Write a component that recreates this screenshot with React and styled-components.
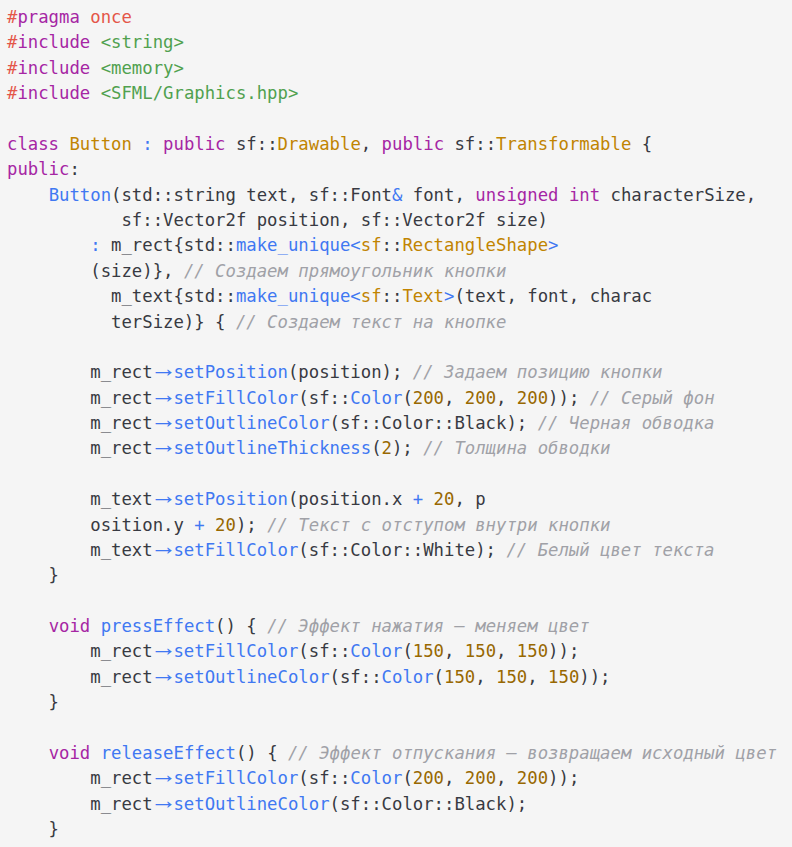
import React from "react";
import styled, { createGlobalStyle } from "styled-components";

const GlobalStyle = createGlobalStyle`
    html, body {
        margin: 0;
        padding: 0;
        background: #f5f5f5;
    }
`;

const colors = {
    k: "#a626a4", // keywords
    t: "#c18401", // types / classes
    f: "#4078f2", // functions
    o: "#4078f2", // operators
    s: "#50a14f", // strings / includes
    n: "#986801", // numbers
    c: "#a0a1a7", // comments
    p: "#e45649", // preprocessor hash
};

const CodeBlock = styled.pre`
    margin: 0;
    padding: 5px 7px 0;
    font-family: "DejaVu Sans Mono", "Liberation Mono", monospace;
    font-size: 17.3px;
    color: #383a42;
    background: #f5f5f5;
    min-height: 842px;
`;

const Line = styled.div`
    height: 25.375px;
    line-height: 25.375px;
    white-space: pre;
`;

const Token = styled.span`
    color: ${({ $kind }) => colors[$kind] || "inherit"};
    font-style: ${({ $kind }) => ($kind === "c" ? "italic" : "normal")};
`;

// the "->" ligature: a thin arrow filling two monospace cells
const ArrowCell = styled.span`
    display: inline-block;
    width: 2ch;
    line-height: 0;
    overflow: visible;
    white-space: nowrap;
`;

const ArrowGlyph = styled.span`
    display: inline-block;
    line-height: 0;
    color: #4078f2;
    font-family: "Liberation Sans", "DejaVu Sans", sans-serif;
    font-size: 1.45em;
    transform-origin: left center;
    transform: translate(-3px, -1px) scaleX(1.08);
`;

// «kind text» marks a coloured token, «a ->» is the arrow ligature
const source = [
    "«p #»«k pragma» «p once»",
    "«p #»«k include» «s <string>»",
    "«p #»«k include» «s <memory>»",
    "«p #»«k include» «s <SFML/Graphics.hpp>»",
    "",
    "«k class» «t Button» «o :» «k public» sf::«t Drawable», «k public» sf::«t Transformable» {",
    "«k public»:",
    "    «f Button»(std::string text, sf::Font«o &» font, «k unsigned» «k int» characterSize,",
    "           sf::Vector2f position, sf::Vector2f size)",
    "        «o :» m_rect{std::«f make_unique»«o <»«t sf»::«t RectangleShape»«o >»",
    "        (size)}, «c // Создаем прямоугольник кнопки»",
    "          m_text{std::«f make_unique»«o <»«t sf»::«t Text»«o >»(text, font, charac",
    "          terSize)} { «c // Создаем текст на кнопке»",
    "",
    "        m_rect«a ->»«f setPosition»(position); «c // Задаем позицию кнопки»",
    "        m_rect«a ->»«f setFillColor»(sf::«f Color»(«n 200», «n 200», «n 200»)); «c // Серый фон»",
    "        m_rect«a ->»«f setOutlineColor»(sf::Color::Black); «c // Черная обводка»",
    "        m_rect«a ->»«f setOutlineThickness»(«n 2»); «c // Толщина обводки»",
    "",
    "        m_text«a ->»«f setPosition»(position.x «o +» «n 20», p",
    "        osition.y «o +» «n 20»); «c // Текст с отступом внутри кнопки»",
    "        m_text«a ->»«f setFillColor»(sf::Color::White); «c // Белый цвет текста»",
    "    }",
    "",
    "    «k void» «f pressEffect»() { «c // Эффект нажатия — меняем цвет»",
    "        m_rect«a ->»«f setFillColor»(sf::«f Color»(«n 150», «n 150», «n 150»));",
    "        m_rect«a ->»«f setOutlineColor»(sf::«f Color»(«n 150», «n 150», «n 150»));",
    "    }",
    "",
    "    «k void» «f releaseEffect»() { «c // Эффект отпускания — возвращаем исходный цвет»",
    "        m_rect«a ->»«f setFillColor»(sf::«f Color»(«n 200», «n 200», «n 200»));",
    "        m_rect«a ->»«f setOutlineColor»(sf::Color::Black);",
    "    }",
];

function renderLine(text) {
    const parts = [];
    const re = /«(\w) ([^»]*)»/g;
    let last = 0;
    let m;
    let i = 0;
    while ((m = re.exec(text))) {
        if (m.index > last) parts.push(text.slice(last, m.index));
        if (m[1] === "a") {
            parts.push(
                <ArrowCell key={i++}>
                    <ArrowGlyph>→</ArrowGlyph>
                </ArrowCell>
            );
        } else {
            parts.push(
                <Token key={i++} $kind={m[1]}>
                    {m[2]}
                </Token>
            );
        }
        last = re.lastIndex;
    }
    if (last < text.length) parts.push(text.slice(last));
    return parts;
}

export default function App() {
    return (
        <>
            <GlobalStyle />
            <CodeBlock>
                {source.map((line, idx) => (
                    <Line key={idx}>{line ? renderLine(line) : " "}</Line>
                ))}
            </CodeBlock>
        </>
    );
}
